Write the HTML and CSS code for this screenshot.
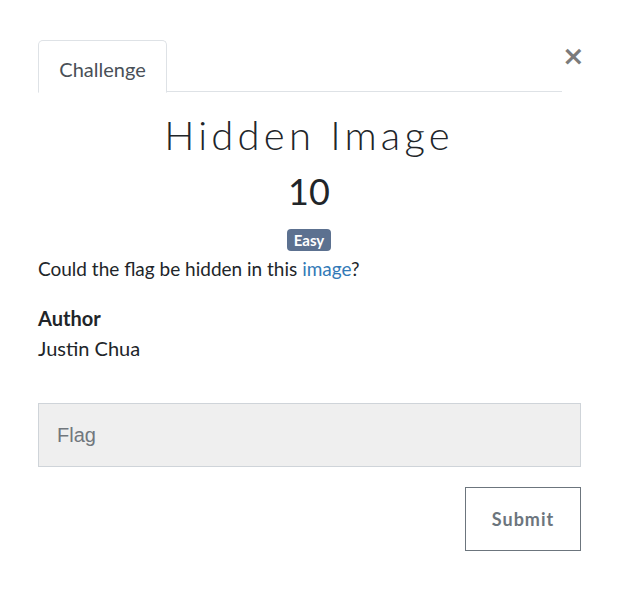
FILE: index.html
```html
<!DOCTYPE html>
<html lang="en">
<head>
<meta charset="utf-8">
<title>Hidden Image</title>
<link rel="stylesheet" href="styles.css">
</head>
<body>
<div class="modal">
  <div class="header">
    <ul class="tabs">
      <li class="tab">Challenge</li>
    </ul>
    <button class="close" aria-label="Close">×</button>
  </div>
  <h2 class="title">Hidden Image</h2>
  <h3 class="value">10</h3>
  <div class="tags"><span class="badge">Easy</span></div>
  <p class="desc">Could the flag be hidden in this <a href="#">image</a>?</p>
  <p class="author-label">Author</p>
  <p class="author">Justin Chua</p>
  <input class="flag" type="text" placeholder="Flag">
  <div class="actions"><button class="submit">Submit</button></div>
</div>
</body>
</html>
```
FILE: styles.css
```css
html, body {
  margin: 0;
  background: #fff;
}
body {
  font-family: Lato, "Noto Sans", sans-serif;
  color: #212529;
}
.modal {
  width: 542px;
  padding: 40px 0 0 38px;
  display: flex;
  flex-direction: column;
}
.header {
  display: flex;
  align-items: flex-start;
}
.tabs {
  list-style: none;
  margin: 0;
  padding: 0;
  width: 525px;
  height: 52px;
  box-sizing: border-box;
  border-bottom: 1px solid #dee2e6;
  display: flex;
}
.tab {
  box-sizing: border-box;
  height: 53px;
  width: 129px;
  text-align: center;
  padding: 14px 0 0;
  border: 1px solid #dee2e6;
  border-bottom-color: #fff;
  border-radius: 5px 5px 0 0;
  font-size: 20px;
  line-height: 28px;
  color: #495057;
  background: #fff;
}
.close {
  border: 0;
  background: none;
  padding: 0;
  margin: 2px 0 0 0;
  font-family: "DejaVu Sans", sans-serif;
  font-size: 27px;
  line-height: 28px;
  color: #7b7b7b;
  font-weight: bold;
  width: 18px;
}
.title {
  margin: 19px 0 0;
  text-align: center;
  font-size: 40px;
  line-height: 48px;
  font-weight: 300;
  letter-spacing: 4.2px;
}
.value {
  margin: 11px 0 0;
  text-align: center;
  font-size: 36px;
  line-height: 43px;
  font-weight: 400;
}
.tags {
  margin-top: 16px;
  text-align: center;
  height: 22px;
}
.badge {
  display: inline-block;
  background: #5c7190;
  color: #fff;
  font-size: 15px;
  font-weight: 700;
  line-height: 22px;
  padding: 0 7px;
  border-radius: 4px;
}
.desc {
  margin: 4px 0 0;
  font-size: 19px;
  line-height: 27px;
}
.desc a {
  color: #337ab7;
  text-decoration: none;
}
.author-label {
  margin: 22px 0 0;
  font-size: 20px;
  line-height: 28px;
  font-weight: 700;
}
.author {
  margin: 2px 0 0;
  font-size: 20px;
  line-height: 28px;
}
.flag {
  margin-top: 41px;
  box-sizing: border-box;
  width: 543px;
  height: 64px;
  border: 1px solid #cfd4d9;
  background: #efefef;
  padding: 0 18px;
  font-family: "Liberation Sans", Arial, sans-serif;
  font-size: 20px;
  color: #495057;
  outline: none;
}
.flag::placeholder {
  color: #71777d;
}
.actions {
  margin-top: 20px;
  display: flex;
  justify-content: flex-end;
  width: 543px;
}
.submit {
  box-sizing: border-box;
  width: 116px;
  height: 64px;
  border: 1.5px solid #6c757d;
  background: #fff;
  color: #6c757d;
  font-family: Lato, sans-serif;
  font-size: 18px;
  font-weight: 700;
  letter-spacing: 1px;
  border-radius: 0;
}
```
